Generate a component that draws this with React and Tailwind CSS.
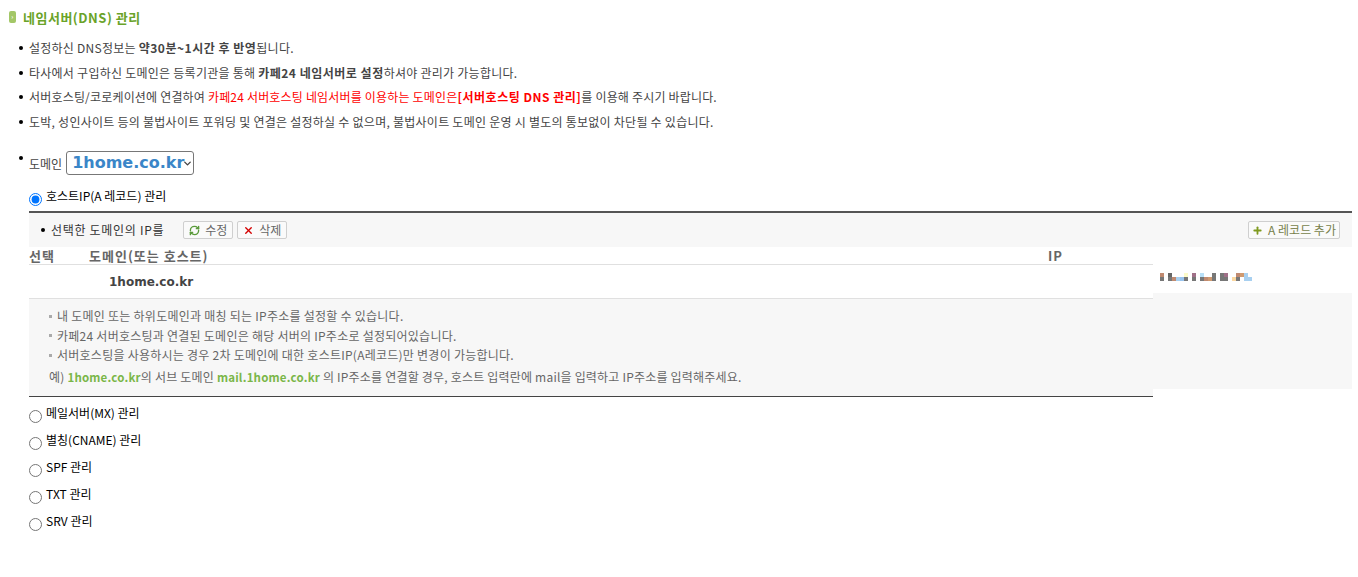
import React from 'react';
import { RefreshCw, X, Plus, ChevronDown } from 'lucide-react';

const KR = 'font-["Noto_Sans_CJK_KR","Liberation_Sans",sans-serif]';

function Dot() {
  return <span className="mr-[6px] inline-block h-[4px] w-[4px] shrink-0 rounded-full bg-black" />;
}

function Notice({ children, className }) {
  return (
    <li className={`flex h-[24.6px] items-center whitespace-pre ${className || 'tracking-[0.25px]'}`}>
      <Dot />
      <span>{children}</span>
    </li>
  );
}

function Strong({ children }) {
  return <b className="tracking-[0.5px]">{children}</b>;
}

function ToolButton({ icon, label, className }) {
  return (
    <button className={`flex h-[18px] items-center justify-center gap-[5px] rounded-[2px] border border-[#cfcfcf] bg-[#fafafa] text-[#666] ${className}`}>
      {icon}
      {label}
    </button>
  );
}

function Radio({ label, checked, className }) {
  return (
    <label className={`flex h-[27px] items-start ${className || ''}`}>
      <input type="radio" name="record" defaultChecked={checked} className="mt-[9px] ml-[29px] h-[13px] w-[13px]" />
      <span className="mt-[6px] ml-[4px] text-black">{label}</span>
    </label>
  );
}

// 가려진 IP 주소 (모자이크)
function Mosaic() {
  const blocks = [
    [0, 0, 4, '#c08a70'], [0, 4, 4, '#777'], [8, 0, 4, '#666'], [8, 4, 4, '#777'], [12, 4, 4, '#c08a70'], [16, 4, 4, '#a8d0f0'],
    [20, 4, 4, '#99c4ee'], [24, 0, 4, '#fdfbc8'], [24, 4, 4, '#777'], [32, 0, 4, '#a07088'], [32, 4, 4, '#777'], [40, 0, 4, '#b8e0f8'],
    [40, 4, 4, '#777'], [44, 4, 4, '#c08a70'], [48, 4, 4, '#d09a70'], [52, 0, 8, '#777'], [60, 0, 8, '#777'], [64, 0, 4, '#a07088'],
    [64, 4, 4, '#777'], [72, 4, 4, '#fcd8a0'], [76, 0, 4, '#c08a70'], [76, 4, 4, '#777'], [80, 0, 4, '#d09a70'], [84, 0, 4, '#a8d0f0'],
    [84, 4, 4, '#a8d0f0'], [88, 4, 4, '#a8d0f0'],
  ];
  return (
    <svg width="96" height="8" className="block" shapeRendering="crispEdges">
      {blocks.map(([x, y, h, c], i) => (
        <rect key={i} x={x} y={y} width={4} height={h} fill={c} />
      ))}
    </svg>
  );
}

export default function App() {
  return (
    <div className={`${KR} h-[577px] w-[1358px] overflow-hidden bg-white text-[12px] leading-none text-[#444]`}>
      <h2 className="mb-[2px] flex h-[34px] items-center pl-[9px] text-[13px] font-bold tracking-[0.5px] text-[#6aa329]">
        <span className="mr-[7px] flex h-[12px] w-[7px] items-center justify-center rounded-[2px] bg-[#a3c767] text-[6px] leading-none text-white">›</span>
        네임서버(DNS) 관리
      </h2>

      <ul className="ml-[19px]">
        <Notice>설정하신 DNS정보는 <Strong>약30분~1시간 후 반영</Strong>됩니다.</Notice>
        <Notice>타사에서 구입하신 도메인은 등록기관을 통해 <Strong>카페24 네임서버로 설정</Strong>하셔야 관리가 가능합니다.</Notice>
        <Notice className="tracking-[0.18px]">서버호스팅/코로케이션에 연결하여 <span className="text-[#f00]">카페24 서버호스팅 네임서버를 이용하는 도메인은<Strong>[서버호스팅 DNS 관리]</Strong></span>를 이용해 주시기 바랍니다.</Notice>
        <Notice>도박, 성인사이트 등의 불법사이트 포워딩 및 연결은 설정하실 수 없으며, 불법사이트 도메인 운영 시 별도의 통보없이 차단될 수 있습니다.</Notice>
      </ul>

      <div className="mt-[17px] ml-[19px] flex h-[24px] items-center">
        <span className="mt-[-10px] mr-[6px] inline-block h-[4px] w-[4px] rounded-full bg-black" />
        <span className="mt-[2px] mr-[4px]">도메인</span>
        <div className="relative">
          <select className='block h-[24px] w-[128px] appearance-none rounded-[3px] border border-[#777] pl-[5px] font-["DejaVu_Sans",sans-serif] text-[16px] font-bold text-[#3a86c8]'>
            <option>1home.co.kr</option>
          </select>
          <ChevronDown size={11} strokeWidth={3} color="#444" className="pointer-events-none absolute top-[7px] right-[1px]" />
        </div>
      </div>

      <Radio label="호스트IP(A 레코드) 관리" checked className="mt-[9px] h-[23px]" />

      <section className="ml-[29px] w-[1323px] border-t-2 border-[#555]">
        <div className="flex h-[34px] items-center bg-[#f7f7f7] px-[12px] text-black">
          <Dot />
          <span className="mr-[19px] tracking-[0.7px] text-[#333]">선택한 도메인의 IP를</span>
          <ToolButton className="mr-[4px] w-[50px]" label="수정" icon={<RefreshCw size={11} color="#5a9a3a" strokeWidth={3} />} />
          <ToolButton className="w-[50px]" label="삭제" icon={<X size={11} color="#d40000" strokeWidth={3} />} />
          <ToolButton className="ml-auto w-[92px] border-[#bbb] text-[#777f4a]" label="A 레코드 추가" icon={<Plus size={11} color="#7f9a1f" strokeWidth={4} />} />
        </div>

        <div className="grid grid-cols-[1124px_1fr]">
          <div>
            <div className="flex h-[18px] items-center border-b border-[#e0e0e0] text-[13px] font-bold tracking-[1px] text-[#666]">
              <span className="w-[60px]">선택</span>
              <span className="w-[959px]">도메인(또는 호스트)</span>
              <span>IP</span>
            </div>
            <div className="flex h-[34px] items-center border-b border-[#e0e0e0] pl-[80px] font-['DejaVu_Sans',sans-serif] text-[12px] font-bold text-[#444]">
              1home.co.kr
            </div>
          </div>
          <div className="bg-[#f7f7f7]">
            <div className="flex h-[46px] items-end bg-white pb-[12px] pl-[7px]">
              <Mosaic />
            </div>
          </div>
        </div>

        <div className="h-[90px] bg-[#f7f7f7] pt-[7px] pl-[20px] tracking-[0.25px] text-[#666]">
          {['내 도메인 또는 하위도메인과 매칭 되는 IP주소를 설정할 수 있습니다.', '카페24 서버호스팅과 연결된 도메인은 해당 서버의 IP주소로 설정되어있습니다.', '서버호스팅을 사용하시는 경우 2차 도메인에 대한 호스트IP(A레코드)만 변경이 가능합니다.'].map((t) => (
            <p key={t} className="flex h-[19.5px] items-center">
              <span className="mr-[5px] h-[3px] w-[3px] bg-[#aaa]" />
              {t}
            </p>
          ))}
          <p className="mt-[3px] flex h-[19px] items-center whitespace-pre tracking-[0.2px]">
            예) <b className="text-[11.5px] text-[#7ab648]">1home.co.kr</b>의 서브 도메인 <b className="text-[11.5px] text-[#7ab648]">mail.1home.co.kr</b> 의 IP주소를 연결할 경우, 호스트 입력란에 mail을 입력하고 IP주소를 입력해주세요.
          </p>
        </div>
        <div className="h-[7px] w-[1124px] bg-[#f7f7f7]" />
        <div className="h-px w-[1124px] bg-[#444]" />
      </section>

      <div className="mt-[4px]">
        <Radio label="메일서버(MX) 관리" />
        <Radio label="별칭(CNAME) 관리" />
        <Radio label="SPF 관리" />
        <Radio label="TXT 관리" />
        <Radio label="SRV 관리" />
      </div>
    </div>
  );
}
